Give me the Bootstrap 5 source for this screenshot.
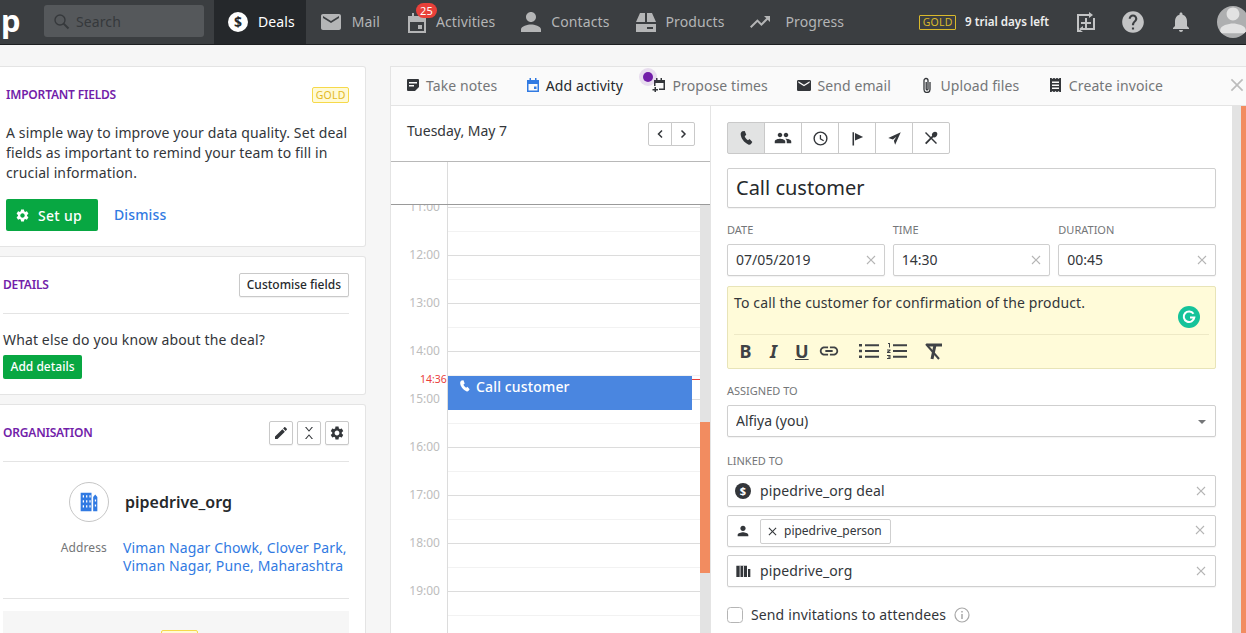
<!DOCTYPE html>
<html lang="en">
<head>
<meta charset="UTF-8">
<title>Pipedrive - Deal</title>
<link href="https://cdn.jsdelivr.net/npm/bootstrap@5.3.3/dist/css/bootstrap.min.css" rel="stylesheet">
<style>
  html, body { height: 633px; overflow: hidden; }
  body { font-family: "Noto Sans", "Open Sans", sans-serif; font-size: 14px; color: #33363a; background: #f6f6f6; letter-spacing: .13px; }
  svg.ico { fill: currentColor; flex: none; display: block; }

  /* top bar */
  .pd-top { height: 45px; background: #3b3e41; border-bottom: 1px solid #1d1f21; padding: 0; flex-wrap: nowrap; justify-content: flex-start; align-items: stretch; letter-spacing: .1px; }
  .pd-logo { width: 44px; font-size: 31px; font-weight: 700; color: #fff; line-height: 40px; padding-left: 1px; overflow: hidden; }
  .pd-search { width: 160px; height: 32px; margin: 5px 10px 0 0; background: #55585b; border-radius: 3px; color: #36393c; gap: 6px; padding-left: 9px; }
  .pd-tab { padding: 0 13px; gap: 9px; color: #b4b5b6; position: relative; text-decoration: none; }
  .pd-tab > span:last-child { margin-top: -2px; }
  .pd-tab.is-on { background: #25282b; color: #fff; padding: 0 11px 0 14px; gap: 10px; }
  .pd-tab.is-snug { gap: 8px; }
  .pd-tab.is-person { gap: 10px; }
  .pd-tab.is-trend { gap: 13px; padding-left: 11px; }
  .pd-count { position: absolute; left: 23px; top: 3px; background: #e9403a; color: #fff; font-size: 11px; line-height: 15px; padding: 0 4px; border-radius: 8px; }
  .pd-right { margin-left: auto; color: #c3c4c5; }
  .pd-right .pd-after { margin-left: 23px; }
  .pd-gold-dark { border: 1px solid #d9b92c; color: #d9b92c; font-size: 10.5px; line-height: 13px; padding: 0 2.5px; border-radius: 1px; letter-spacing: .2px; }
  .pd-trial { color: #eee; font-size: 11.6px; font-weight: 600; margin: 0 26px 0 9px; letter-spacing: 0; }
  .pd-avatar { width: 32px; height: 32px; border-radius: 50%; background: #aeafb0; margin: 0 -3px 0 24px; overflow: hidden; color: #e2e2e2; }

  /* left column */
  .pd-page { height: 588px; overflow: hidden; }
  .pd-side { width: 366px; flex: none; padding-top: 21px; }
  .pd-card { border-radius: 0 3px 3px 0; border: 1px solid #e4e4e4; border-left: 0; margin-bottom: 9px; padding: 16px 16px 15px 3px; background: #fff; }
  .pd-card.first { padding: 19px 16px 15px 6px; }
  .pd-card-title { font-size: 12px; font-weight: 600; color: #721ea9; text-transform: uppercase; letter-spacing: -.2px; }
  .pd-gold { background: #fffad6; border: 1px solid #f6d94a; color: #e3b91f; font-size: 10.5px; line-height: 14px; padding: 0 2.500px; border-radius: 2px; letter-spacing: .2px; }
  .pd-lead { line-height: 20px; margin: 19px 0 16px; }
  .pd-green { background: #08a742; border: 0; color: #fff; border-radius: 2px; font-weight: 500; }
  .pd-green:hover { background: #08a742; color: #fff; }
  .pd-setup { height: 32px; width: 92px; font-size: 14px; letter-spacing: .3px; gap: 8px; padding: 0 0 0 9px; }
  .pd-dismiss { color: #317ae2; font-weight: 500; text-decoration: none; margin: -2px 0 0 16px; }
  .pd-mini { height: 24px; border: 1px solid #c9c9c9; border-radius: 2px; background: #fff; color: #26292c; font-size: 12px; font-weight: 500; padding: 0 7px; box-shadow: 0 1px 1px rgba(0,0,0,.06); letter-spacing: 0; }
  .pd-square { width: 24px; padding: 0; display: flex; align-items: center; justify-content: center; color: #33363a; }
  .pd-rule { border-top: 1px solid #e4e4e4; opacity: 1; margin: 16px 0; }
  .pd-ask { line-height: 20px; }
  .pd-add { height: 24px; width: 79px; font-size: 12px; padding: 0; margin-top: 5px; display: block; letter-spacing: 0; }
  .pd-orgrow { margin-top: 20px; }
  .pd-orgicon { width: 40px; height: 40px; border-radius: 50%; border: 1px solid #c6c6c6; color: #317ae2; margin-left: 66px; }
  .pd-orgname { font-size: 16px; font-weight: 600; color: #26292c; margin-left: 16px; letter-spacing: 0; }
  .pd-addrrow { margin-top: 17px; }
  .pd-addr-label { width: 104px; text-align: right; font-size: 12px; color: #747678; line-height: 18px; }
  .pd-addr { color: #317ae2; margin-left: 16px; line-height: 18px; text-decoration: none; white-space: nowrap; }
  .pd-rule.is-low { margin: 23px 0 16px; }
  .pd-grey { background: #f6f6f6; padding-top: 19px; height: 100px; margin-top: -4px; }
  .pd-gold-wide { width: 37px; height: 16px; margin-left: 158px; display: block; }

  /* activity panel */
  .pd-panel { flex: 1; margin: 21px 0 0 24px; background: #fff; border: 1px solid #e4e4e4; border-width: 1px 0 0 1px; min-width: 0; }
  .pd-tools { height: 39px; border-bottom: 1px solid #e4e4e4; background: #fafafa; padding: 0 0 2px 16px; color: #747678; }
  .pd-tool { gap: 7px; margin-right: 29.5px; letter-spacing: .1px; }
  .pd-tool svg { color: #33363a; }
  .pd-tool.is-on { color: #26292c; }
  .pd-tool.is-on svg { color: #317ae2; }
  .pd-tool.is-tight { gap: 6px; }
  .pd-tool.is-loose { gap: 8px; }
  .pd-tool.is-nudged { margin-left: 1px; }
  .pd-close { margin-left: auto; margin-right: 2px; color: #bcbcbc; }
  .pd-dot { position: absolute; left: 248px; top: 1px; width: 18px; height: 18px; border-radius: 50%; background: rgba(114,30,169,.13); }
  .pd-dot::after { content: ""; position: absolute; left: 4px; top: 4px; width: 10px; height: 10px; border-radius: 50%; background: #721ea9; }
  .pd-body { height: 528px; }

  /* calendar */
  .pd-cal { width: 320px; flex: none; border-right: 1px solid #e4e4e4; }
  .pd-cal-head { height: 56px; border-bottom: 1px solid #b8b8b8; padding: 16px 15px 0 16px; letter-spacing: 0; }
  .pd-cal-head > span { margin-top: -2px; }
  .pd-pager .btn { width: 24px; height: 24px; padding: 0; border: 1px solid #c9c9c9; border-radius: 2px; color: #33363a; display: flex; align-items: center; justify-content: center; background: #fff; }
  .pd-allday { height: 43px; border-bottom: 1px solid #9a9a9a; }
  .pd-gutter { width: 57px; flex: none; border-right: 1px solid #dcdcdc; }
  .pd-scroll { height: 428px; overflow: hidden; position: relative; letter-spacing: 0; }
  .pd-hours { flex: 1; min-width: 0; }
  .pd-hour { height: 48px; }
  .pd-hour:first-child { margin-top: -46px; }
  .pd-hour .pd-gutter { color: #bdbdbd; font-size: 12px; text-align: right; padding-right: 7px; line-height: 16px; }
  .pd-hour .pd-gutter span { display: block; margin-top: -8px; }
  .pd-lane { flex: 1; border-top: 1px solid #dcdcdc; }
  .pd-lane i { display: block; height: 24px; border-bottom: 1px solid #f2f2f2; }
  .pd-track { width: 10px; flex: none; background: #e3e3e3; position: relative; }
  .pd-thumb { position: absolute; left: 0; right: 0; top: 217px; height: 151px; background: #f28c60; }
  .pd-now { position: absolute; left: 57px; right: 10px; top: 174px; border-top: 1px solid #e9403a; }
  .pd-nowlabel { position: absolute; left: 29px; top: 167px; color: #e9403a; font-size: 10.5px; line-height: 14px; }
  .pd-event { position: absolute; left: 57px; top: 171px; width: 244px; height: 34px; background: #4a86e0; color: #fff; font-weight: 500; padding: 2px 0 0 10px; gap: 5px; line-height: 18px; letter-spacing: .15px; }
  .pd-event svg { margin-top: 1px; }

  /* activity form */
  .pd-form { flex: 1; min-width: 0; padding: 16px 16px 0 16px; }
  .pd-types .btn { width: 38px; height: 32px; padding: 0; display: flex; align-items: center; justify-content: center; border: 1px solid #c9c9c9; color: #33363a; border-radius: 2px; background: #fff; }
  .pd-types .btn.is-on { background: #e2e3e3; }
  .pd-field { border: 1px solid #cfcfcf; border-radius: 2px; height: 32px; font-size: 14px; color: #33363a; padding: 0 8px 2px; box-shadow: 0 1px 1px rgba(0,0,0,.05); background-color: #fff; }
  .pd-subject { height: 40px; font-size: 20px; margin: 14px 0 15px; color: #26292c; }
  .pd-label { font-size: 11px; line-height: 14px; color: #747678; text-transform: uppercase; margin-bottom: 7px; display: block; letter-spacing: 0; }
  .pd-third { flex: 1 1 0; }
  .pd-clear { position: absolute; right: 9px; top: 50%; transform: translateY(-50%); color: #b5b5b5; }
  .pd-note { background: #fffbd9; border: 1px solid #e8e4b8; border-radius: 2px; height: 83px; padding: 6px 6px 0 6px; margin: 10px 0 15px; position: relative; }
  .pd-note p { margin: 0; height: 41px; line-height: 20px; }
  .pd-notebar { border-top: 1px solid #eee9c6; height: 33px; padding-left: 5px; color: #3f4245; font-size: 18px; font-weight: 700; line-height: 1; letter-spacing: 0; }
  .pd-fmt { width: 13px; text-align: center; margin-right: 15px; }
  .pd-fmt.is-last { margin-right: 10px; }
  .pd-fmt-link { margin-right: 19px; }
  .pd-gram { position: absolute; right: 15px; top: 19px; width: 22px; height: 22px; border-radius: 50%; background: #15c39a; color: #fff; }
  .pd-caret { position: absolute; right: 10px; top: 15px; border: 4px solid transparent; border-top-color: #747678; border-bottom: 0; }
  .pd-select { background-image: none; padding-right: 8px; }
  .pd-selectwrap { margin-bottom: 17px; }
  .pd-link { gap: 9px; margin-bottom: 8px; padding: 0 8px 1px 7px; }
  .pd-link.has-chip { padding-bottom: 0; }
  .pd-link .pd-xx { color: #b5b5b5; margin-right: 1px; }
  .pd-link.has-chip .pd-xx { margin-right: 2px; margin-top: -3px; }
  .pd-dollar { width: 16px; height: 16px; border-radius: 50%; background: #33363a; color: #fff; font-size: 11px; font-weight: 700; line-height: 16px; text-align: center; flex: none; letter-spacing: 0; }
  .pd-dollar.pd-navdollar { width: 20px; height: 20px; line-height: 20px; font-size: 14px; background: #fff; color: #25282b; }
  .pd-chip { border: 1px solid #cfcfcf; border-radius: 2px; height: 25px; font-size: 12px; padding: 0 8px 0 7px; gap: 7px; letter-spacing: 0; }
  .pd-invite { margin-top: 17px; }
  .pd-check { width: 16px; height: 16px; margin: 0 8px 0 0; border-radius: 2px; border-color: #b5b5b5; }
  .pd-scrollbar { width: 14px; flex: none; background: #e3e3e3; position: relative; }
  .pd-scrollbar::after { content: ""; position: absolute; right: 0; top: 0; bottom: 0; width: 5px; background: #f28c60; }
</style>
</head>
<body>
<svg class="d-none">
  <symbol id="i-mail" viewBox="0 0 24 24"><path d="M20 4H4c-1.100 0-2 .9-2 2v12c0 1.100.9 2 2 2h16c1.100 0 2-.9 2-2V6c0-1.100-.9-2-2-2zm0 4l-8 5-8-5V6l8 5 8-5v2z"/></symbol>
  <symbol id="i-person" viewBox="0 0 24 24"><path d="M12 12c2.210 0 4-1.790 4-4s-1.790-4-4-4-4 1.790-4 4 1.790 4 4 4zm0 2c-2.670 0-8 1.340-8 4v2h16v-2c0-2.660-5.330-4-8-4z"/></symbol>
  <symbol id="i-trend" viewBox="0 0 24 24"><path d="M16 6l2.290 2.290-4.880 4.880-4-4L2 16.590 3.410 18l6-6 4 4 6.300-6.290L22 12V6z"/></symbol>
  <symbol id="i-gear" viewBox="0 0 24 24"><path d="M19.140 12.940c.04-.3.06-.61.06-.94 0-.32-.02-.64-.07-.94l2.030-1.580c.18-.14.23-.41.12-.61l-1.920-3.320c-.12-.22-.37-.29-.59-.22l-2.390.96c-.5-.38-1.030-.7-1.620-.94l-.36-2.540c-.04-.24-.24-.41-.48-.41h-3.840c-.24 0-.43.17-.47.41l-.36 2.540c-.59.24-1.130.57-1.620.94l-2.390-.96c-.22-.08-.47 0-.59.22L2.740 8.870c-.12.21-.08.47.12.61l2.030 1.580c-.05.3-.09.63-.09.94s.02.64.07.94l-2.030 1.580c-.18.14-.23.41-.12.61l1.920 3.320c.12.22.37.29.59.22l2.390-.96c.5.38 1.030.7 1.620.94l.36 2.540c.05.24.24.41.48.41h3.840c.24 0 .44-.17.47-.41l.36-2.540c.59-.24 1.130-.56 1.620-.94l2.390.96c.22.08.47 0 .59-.22l1.920-3.320c.12-.22.07-.47-.12-.61l-2.010-1.580zM12 15.600c-1.980 0-3.600-1.620-3.600-3.600s1.620-3.600 3.600-3.600 3.600 1.620 3.600 3.600-1.620 3.600-3.600 3.600z"/></symbol>
  <symbol id="i-phone" viewBox="0 0 24 24"><path d="M6.500 2l3.600-.6 2.300 5.900-2.300 2c.7 2.400 2.600 4.700 4.900 5.900l2.300-1.600 4.200 4.300-2 3c-1 1.200-2.700 1.500-4.100.8C9 18.800 4.300 12.500 4 6.500c-.1-2 1-3.700 2.500-4.500z"/></symbol>
  <symbol id="i-group" viewBox="0 0 24 24"><path d="M16 11c1.660 0 2.990-1.340 2.990-3S17.660 5 16 5s-3 1.340-3 3 1.340 3 3 3zm-8 0c1.660 0 2.990-1.340 2.990-3S9.660 5 8 5 5 6.340 5 8s1.340 3 3 3zm0 2c-2.330 0-7 1.170-7 3.500V19h14v-2.500C15 14.170 10.330 13 8 13zm8 0c-.29 0-.62.02-.97.05 1.160.84 1.970 1.970 1.970 3.450V19h6v-2.500c0-2.330-4.670-3.500-7-3.500z"/></symbol>
  <symbol id="i-clock" viewBox="0 0 24 24"><path d="M12 2a10 10 0 1 0 0 20 10 10 0 0 0 0-20zm0 18a8 8 0 1 1 0-16 8 8 0 0 1 0 16zm.8-13H11v6l5 3 .9-1.500-4.100-2.400z"/></symbol>
  <symbol id="i-flag" viewBox="0 0 24 24"><path d="M4 2h2.500v21H4zM8 3l13 6.500L8 15z"/></symbol>
  <symbol id="i-send" viewBox="0 0 24 24"><path d="M22 2L2 11l7.500 2.500L15 9l-4 6.500L13 22z"/></symbol>
  <symbol id="i-meal" viewBox="0 0 24 24"><path d="M3 4.500L4.500 3 21 19.500 19.500 21 3 4.500zM20.500 3.500c1.700 1.700 1.200 4.500-.6 6.300-1.400 1.300-3.200 1.700-4.600.9L5 21.500 3 19.500 13.700 8.800c-.7-1.500-.3-3.400 1-4.700 1.700-1.700 4.200-2.200 5.800-.6z"/></symbol>
  <symbol id="i-pencil" viewBox="0 0 24 24"><path d="M3 17.250V21h3.750L17.810 9.940l-3.750-3.750L3 17.250zM20.710 7.040c.39-.39.39-1.020 0-1.410l-2.340-2.340c-.39-.39-1.020-.39-1.410 0l-1.830 1.830 3.750 3.750 1.830-1.830z"/></symbol>
  <symbol id="i-help" viewBox="0 0 24 24"><path d="M12 2C6.480 2 2 6.480 2 12s4.480 10 10 10 10-4.480 10-10S17.520 2 12 2zm1 17h-2v-2h2v2zm2.070-7.750l-.9.920C13.450 12.900 13 13.500 13 15h-2v-.5c0-1.100.45-2.100 1.170-2.830l1.240-1.260c.37-.36.59-.86.59-1.410 0-1.100-.9-2-2-2s-2 .9-2 2H8c0-2.210 1.790-4 4-4s4 1.790 4 4c0 .88-.36 1.680-.93 2.250z"/></symbol>
  <symbol id="i-bell" viewBox="0 0 24 24"><path d="M12 22c1.100 0 2-.9 2-2h-4c0 1.100.89 2 2 2zm6-6v-5c0-3.070-1.640-5.640-4.500-6.320V4c0-.83-.67-1.500-1.500-1.500s-1.500.67-1.500 1.500v.68C7.630 5.360 6 7.920 6 11v5l-2 2v1h16v-1l-2-2z"/></symbol>
  <symbol id="i-link" viewBox="0 0 24 24"><path d="M3.900 12c0-1.710 1.390-3.100 3.100-3.100h4V7H7c-2.760 0-5 2.240-5 5s2.240 5 5 5h4v-1.900H7c-1.710 0-3.100-1.390-3.100-3.100zM8 13h8v-2H8v2zm9-6h-4v1.900h4c1.710 0 3.100 1.390 3.100 3.100s-1.390 3.100-3.100 3.100h-4V17h4c2.760 0 5-2.240 5-5s-2.240-5-5-5z"/></symbol>
  <symbol id="i-x" viewBox="0 0 12 12"><path d="M1.700.7L6 5l4.300-4.300 1 1L7 6l4.300 4.300-1 1L6 7l-4.300 4.300-1-1L5 6 .7 1.700z"/></symbol>
  <symbol id="i-org" viewBox="0 0 24 24"><path d="M2 1h13v22H2zM17 6l2.500-3L22 6v17h-5z"/><path fill="#fff" d="M4.500 4h1.500v2.500H4.500zm4 0H10v2.500H8.500zm4 0H14v2.500h-1.500zM4.500 10h1.500v2.500H4.500zm4 0H10v2.500H8.500zm4 0H14v2.500h-1.500zM4.500 16h1.500v2.500H4.500zm4 0H10v2.500H8.500zm4 0H14v2.500h-1.500zM19 9h1.500v2.500H19zm0 6h1.500v2.500H19z"/></symbol>
  <symbol id="i-org2" viewBox="0 0 24 24"><path d="M2 4h16v17H2zM19.500 9H23v12h-3.500z"/><path fill="#fff" d="M7 4h1.200v17H7zm5 0h1.200v17H12z"/></symbol>
  <symbol id="i-merge" viewBox="0 0 24 24"><path d="M6 3l6 7 6-7h-2l-4 4.700L8 3zM6 21l6-7 6 7h-2l-4-4.700L8 21z"/></symbol>
</svg>

<nav class="navbar pd-top">
  <div class="pd-logo">p</div>
  <div class="pd-search d-flex align-items-center">
    <svg width="17" height="17" viewBox="0 0 17 17" fill="none" stroke="currentColor" stroke-width="1.400"><circle cx="7" cy="7" r="5"/><path d="M10.600 10.600L15.500 15.500" stroke-width="2"/></svg>
    <span>Search</span>
  </div>
  <a class="pd-tab is-on d-flex align-items-center" href="#"><span class="pd-dollar pd-navdollar">$</span><span>Deals</span></a>
  <a class="pd-tab d-flex align-items-center" href="#"><svg class="ico" width="24" height="24"><use href="#i-mail"/></svg><span>Mail</span></a>
  <a class="pd-tab is-snug d-flex align-items-center" href="#">
    <svg class="ico" width="22" height="24" viewBox="0 0 22 24"><path d="M2 6h4V3h2v3h6V3h2v3h4v17H2zm2 6v9h14v-9zm8 3h4v4h-4z" fill-rule="evenodd"/></svg>
    <em class="pd-count fst-normal">25</em><span>Activities</span>
  </a>
  <a class="pd-tab is-person d-flex align-items-center" href="#"><svg class="ico" width="20" height="20" viewBox="4 4 16 16"><use href="#i-person" width="24" height="24"/></svg><span>Contacts</span></a>
  <a class="pd-tab is-snug d-flex align-items-center" href="#">
    <svg class="ico" width="22" height="24" viewBox="0 0 22 24"><path d="M1 12L5 3h5v9zM12 3h5l4 9h-9zM1 14h20v8H1zm11 3v2h6v-2z" fill-rule="evenodd"/></svg><span>Products</span>
  </a>
  <a class="pd-tab is-trend d-flex align-items-center" href="#"><svg class="ico" width="24" height="24"><use href="#i-trend"/></svg><span>Progress</span></a>
  <div class="pd-right d-flex align-items-center">
    <span class="pd-gold-dark">GOLD</span>
    <span class="pd-trial">9 trial days left</span>
    <svg class="ico" width="22" height="26" viewBox="0 0 22 26"><path d="M2 5h12v2H4v14h4v2H2zM14 3l4 3-4 3zM20 21V9h-2v10H8v-2l-4 3 4 3v-2zM10 9h2v4h4v2h-4v4h-2v-4H6v-2h4z"/></svg>
    <svg class="ico pd-after" width="26" height="26"><use href="#i-help"/></svg>
    <svg class="ico pd-after" width="24" height="24"><use href="#i-bell"/></svg>
    <div class="pd-avatar"><svg class="ico" width="32" height="32" viewBox="2 3 20 20"><use href="#i-person" width="24" height="24"/></svg></div>
  </div>
</nav>

<div class="d-flex pd-page">
  <aside class="pd-side">
    <section class="card pd-card first">
      <div class="d-flex justify-content-between align-items-center">
        <span class="pd-card-title">Important fields</span>
        <span class="pd-gold">GOLD</span>
      </div>
      <p class="pd-lead">A simple way to improve your data quality. Set deal fields as important to remind your team to fill in crucial information.</p>
      <div class="d-flex align-items-center">
        <button class="btn pd-green pd-setup d-flex align-items-center"><svg class="ico" width="15" height="15"><use href="#i-gear"/></svg>Set up</button>
        <a class="pd-dismiss" href="#">Dismiss</a>
      </div>
    </section>

    <section class="card pd-card">
      <div class="d-flex justify-content-between align-items-center">
        <span class="pd-card-title">Details</span>
        <button class="pd-mini">Customise fields</button>
      </div>
      <hr class="pd-rule">
      <div class="pd-ask">What else do you know about the deal?</div>
      <button class="btn pd-green pd-add">Add details</button>
    </section>

    <section class="card pd-card">
      <div class="d-flex align-items-center">
        <span class="pd-card-title me-auto">Organisation</span>
        <button class="pd-mini pd-square"><svg class="ico" width="16" height="16"><use href="#i-pencil"/></svg></button>
        <button class="pd-mini pd-square ms-1"><svg class="ico" width="16" height="16"><use href="#i-merge"/></svg></button>
        <button class="pd-mini pd-square ms-1"><svg class="ico" width="16" height="16"><use href="#i-gear"/></svg></button>
      </div>
      <hr class="pd-rule mb-0">
      <div class="d-flex align-items-center pd-orgrow">
        <div class="pd-orgicon d-flex align-items-center justify-content-center"><svg class="ico" width="20" height="20"><use href="#i-org"/></svg></div>
        <span class="pd-orgname">pipedrive_org</span>
      </div>
      <div class="d-flex pd-addrrow">
        <span class="pd-addr-label">Address</span>
        <a class="pd-addr" href="#">Viman Nagar Chowk, Clover Park,<br>Viman Nagar, Pune, Maharashtra</a>
      </div>
      <hr class="pd-rule is-low">
      <div class="pd-grey"><span class="pd-gold pd-gold-wide"></span></div>
    </section>
  </aside>

  <main class="pd-panel">
    <div class="pd-tools d-flex align-items-center position-relative">
      <span class="pd-tool d-flex align-items-center"><svg class="ico" width="12" height="12" viewBox="0 0 12 12"><path d="M1 0h10a1 1 0 0 1 1 1v7l-4 4H1a1 1 0 0 1-1-1V1a1 1 0 0 1 1-1zm1 3v1.500h8V3zm0 3v1.500h5V6z" fill-rule="evenodd"/></svg>Take notes</span>
      <span class="pd-tool is-on d-flex align-items-center"><svg class="ico" width="12" height="14" viewBox="0 0 12 14"><path d="M0 2h2.500V0H4v2h4V0h1.500v2H12v12H0zm1.500 4v6.500h9V6zM7 8.500h2.500V11H7z" fill-rule="evenodd"/></svg>Add activity</span>
      <span class="pd-tool is-tight d-flex align-items-center"><svg class="ico" width="14" height="14" viewBox="0 0 14 14"><path d="M2 2h2V0h1.500v2h3V0H10v2h3v10H7v-1.500h4.500V5h-8v3H2zM2.500 9H4v2h2v1.500H4V14H2.500v-1.500H.5V11h2z"/></svg>Propose times</span>
      <span class="pd-tool is-tight d-flex align-items-center"><svg class="ico" width="14" height="13" viewBox="2 4 20 16"><use href="#i-mail" width="24" height="24"/></svg>Send email</span>
      <span class="pd-tool is-nudged d-flex align-items-center"><svg width="12" height="16" viewBox="0 0 12 16" fill="none" stroke="currentColor" stroke-width="1.300"><path d="M9 5v7.500a3 3 0 0 1-6 0V3.500a2 2 0 0 1 4 0V12a.9.9 0 0 1-1.800 0V5"/></svg>Upload files</span>
      <span class="pd-tool is-loose is-nudged d-flex align-items-center"><svg class="ico" width="11" height="14" viewBox="0 0 11 14"><path d="M0 0h1.500l1 1 1-1h1l1 1 1-1h1l1 1 1-1H11v14H9.500l-1-1-1 1h-1l-1-1-1 1h-1l-1-1-1 1H0zm2 3.500V5h7V3.500zM2 6.500V8h7V6.500zM2 9.500V11h7V9.500z" fill-rule="evenodd"/></svg>Create invoice</span>
      <svg class="ico pd-close" width="14" height="14"><use href="#i-x"/></svg>
      <span class="pd-dot"></span>
    </div>

    <div class="pd-body d-flex">
      <div class="pd-cal">
        <div class="pd-cal-head d-flex justify-content-between align-items-start">
          <span>Tuesday, May 7</span>
          <div class="btn-group pd-pager">
            <button class="btn"><svg width="10" height="10" viewBox="0 0 10 10" fill="none" stroke="currentColor" stroke-width="1.500"><path d="M7 1.500L3.500 5 7 8.500"/></svg></button>
            <button class="btn"><svg width="10" height="10" viewBox="0 0 10 10" fill="none" stroke="currentColor" stroke-width="1.500"><path d="M3.500 1.500L7 5 3.500 8.500"/></svg></button>
          </div>
        </div>
        <div class="pd-allday"><div class="pd-gutter h-100"></div></div>
        <div class="pd-scroll d-flex">
          <div class="pd-hours" id="hours"></div>
          <div class="pd-track"><div class="pd-thumb"></div></div>
          <div class="pd-now"></div>
          <div class="pd-nowlabel">14:36</div>
          <div class="pd-event d-flex">
            <svg class="ico" width="13" height="14"><use href="#i-phone"/></svg>Call customer
          </div>
        </div>
      </div>

      <form class="pd-form" onsubmit="return false">
        <div class="btn-group pd-types d-inline-flex">
          <button class="btn is-on"><svg class="ico" width="16" height="16"><use href="#i-phone"/></svg></button>
          <button class="btn"><svg class="ico" width="18" height="18"><use href="#i-group"/></svg></button>
          <button class="btn"><svg class="ico" width="17" height="17"><use href="#i-clock"/></svg></button>
          <button class="btn"><svg class="ico" width="15" height="17"><use href="#i-flag"/></svg></button>
          <button class="btn"><svg class="ico" width="15" height="15"><use href="#i-send"/></svg></button>
          <button class="btn"><svg class="ico" width="16" height="16"><use href="#i-meal"/></svg></button>
        </div>
        <input class="form-control pd-field pd-subject" value="Call customer">
        <div class="d-flex gap-2">
          <div class="pd-third">
            <label class="pd-label">Date</label>
            <div class="position-relative"><input class="form-control pd-field" value="07/05/2019"><svg class="ico pd-clear" width="10" height="10"><use href="#i-x"/></svg></div>
          </div>
          <div class="pd-third">
            <label class="pd-label">Time</label>
            <div class="position-relative"><input class="form-control pd-field" value="14:30"><svg class="ico pd-clear" width="10" height="10"><use href="#i-x"/></svg></div>
          </div>
          <div class="pd-third">
            <label class="pd-label">Duration</label>
            <div class="position-relative"><input class="form-control pd-field" value="00:45"><svg class="ico pd-clear" width="10" height="10"><use href="#i-x"/></svg></div>
          </div>
        </div>
        <div class="pd-note">
          <p>To call the customer for confirmation of the product.</p>
          <div class="pd-notebar d-flex align-items-center">
            <span class="pd-fmt">B</span>
            <span class="pd-fmt fst-italic">I</span>
            <span class="pd-fmt is-last text-decoration-underline">U</span>
            <svg class="ico pd-fmt-link" width="22" height="22"><use href="#i-link"/></svg>
            <svg class="ico me-2" width="20" height="18" viewBox="0 0 20 18"><path d="M0 2h3v2.500H0zM0 7.800h3v2.500H0zM0 13.500h3V16H0zM6 2.300h14v2H6zM6 8h14v2H6zM6 13.700h14v2H6z"/></svg>
            <svg class="ico me-3" width="20" height="18" viewBox="0 0 20 18"><path d="M1 1h2v4.500H2V2H1zM0 7.500h3.500v1.300L1.700 10h1.800v1H0V9.800L2 8.500H0zM0 13h3.500v4H0v-1h2.500v-.5H1v-1h1.500V14H0zM6 2.300h14v2H6zM6 8h14v2H6zM6 13.700h14v2H6z"/></svg>
            <svg width="20" height="20" viewBox="0 0 20 20" fill="none" stroke="currentColor"><path d="M4 4h15" stroke-width="3"/><path d="M12 4L9 18" stroke-width="3"/><path d="M3 3l13 15" stroke-width="2"/></svg>
          </div>
          <span class="pd-gram d-flex align-items-center justify-content-center">
            <svg width="14" height="14" viewBox="0 0 14 14" fill="none" stroke="currentColor" stroke-width="2"><path d="M11.500 3.800A5.300 5.300 0 1 0 12.300 7.500H8"/></svg>
          </span>
        </div>
        <label class="pd-label">Assigned to</label>
        <div class="position-relative pd-selectwrap">
          <select class="form-select pd-field pd-select"><option>Alfiya (you)</option></select>
          <span class="pd-caret"></span>
        </div>
        <label class="pd-label">Linked to</label>
        <div class="pd-field pd-link d-flex align-items-center">
          <span class="pd-dollar">$</span>
          <span class="me-auto">pipedrive_org deal</span>
          <svg class="ico pd-xx" width="10" height="10"><use href="#i-x"/></svg>
        </div>
        <div class="pd-field pd-link has-chip d-flex align-items-center">
          <svg class="ico" width="16" height="16"><use href="#i-person"/></svg>
          <span class="pd-chip d-flex align-items-center me-auto"><svg class="ico" width="9" height="9"><use href="#i-x"/></svg>pipedrive_person</span>
          <svg class="ico pd-xx" width="10" height="10"><use href="#i-x"/></svg>
        </div>
        <div class="pd-field pd-link d-flex align-items-center">
          <svg class="ico" width="16" height="16"><use href="#i-org2"/></svg>
          <span class="me-auto">pipedrive_org</span>
          <svg class="ico pd-xx" width="10" height="10"><use href="#i-x"/></svg>
        </div>
        <div class="d-flex align-items-center pd-invite">
          <input type="checkbox" class="form-check-input pd-check">
          <span>Send invitations to attendees</span>
          <svg class="ms-2" width="16" height="16" viewBox="0 0 16 16" fill="none" stroke="#a8a8a8" stroke-width="1.200"><circle cx="8" cy="8" r="7"/><path d="M8 7v5M8 4v1.500" stroke-width="1.500"/></svg>
        </div>
      </form>
      <div class="pd-scrollbar"></div>
    </div>
  </main>
</div>

<script>
  // hour rows of the day view, first one only shows its bottom edge
  const hoursEl = document.getElementById('hours');
  for (let h = 10; h <= 19; h++) {
    const row = document.createElement('div');
    row.className = 'pd-hour d-flex';
    const label = h === 10 ? '' : `<span>${h}:00</span>`;
    row.innerHTML = `<div class="pd-gutter">${label}</div><div class="pd-lane"><i></i></div>`;
    hoursEl.appendChild(row);
  }
</script>
<script src="https://cdn.jsdelivr.net/npm/bootstrap@5.3.3/dist/js/bootstrap.bundle.min.js"></script>
</body>
</html>
